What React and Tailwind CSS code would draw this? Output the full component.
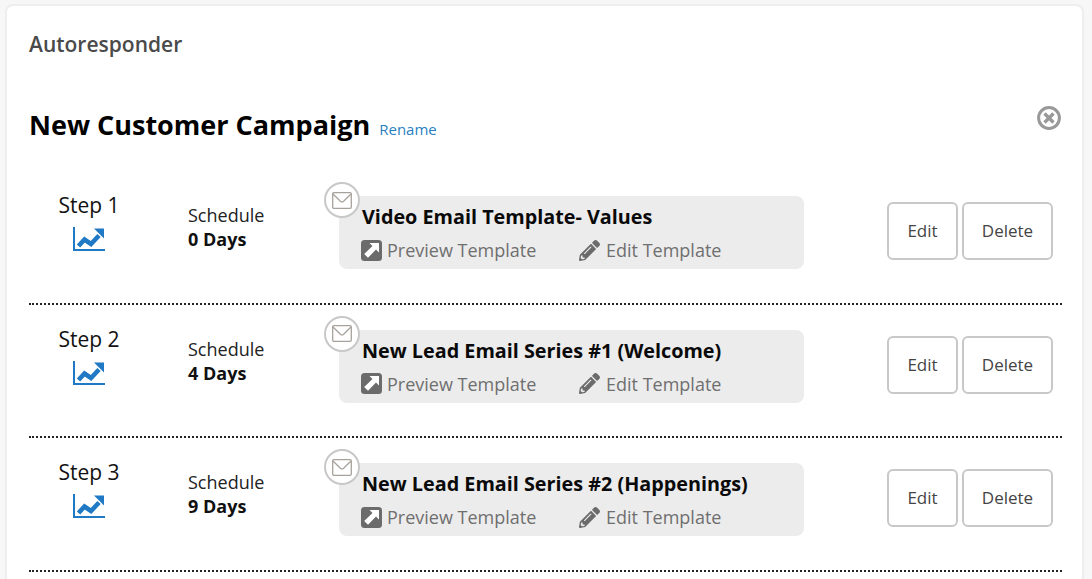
import React from 'react';
import { FaPencilAlt } from 'react-icons/fa';

const steps = [
  { step: 'Step 1', days: '0 Days', name: 'Video Email Template- Values' },
  { step: 'Step 2', days: '4 Days', name: 'New Lead Email Series #1 (Welcome)' },
  { step: 'Step 3', days: '9 Days', name: 'New Lead Email Series #2 (Happenings)' },
];

const EnvelopeIcon = () => (
  <svg width="20" height="17" viewBox="0 0 20 17" fill="none" stroke="#a8a29c" strokeWidth="1.3">
    <rect x="0.7" y="0.7" width="18.6" height="15.6" rx="1.2" />
    <path d="M1 2 L8.4 9.2 Q10 10.6 11.6 9.2 L19 2" />
  </svg>
);

const ChartIcon = () => (
  <svg width="32" height="24" viewBox="0 0 32 24" className="mt-[8px]">
    <path d="M1 0 V23 H32" fill="none" stroke="#2079c4" strokeWidth="2" />
    <path d="M5.5 19 L11.5 12.5 L18 17 L26 8.5" fill="none" stroke="#2079c4" strokeWidth="4.6" />
    <path d="M21 1.5 H31 V11.5 Z" fill="#2079c4" />
  </svg>
);

const PreviewIcon = () => (
  <svg width="21" height="21" viewBox="0 0 21 21" className="shrink-0 -ml-[1px]">
    <rect width="21" height="21" rx="3.5" fill="#6b6b6b" />
    <path d="M8.5 3 H18 V12.5 L15 9.5 L7 17.8 L3.2 14 L11.5 6 Z" fill="#fff" />
  </svg>
);

const CloseIcon = () => (
  <svg width="24" height="24" viewBox="0 0 24 24" fill="none" stroke="#999999">
    <circle cx="12" cy="12" r="10.4" strokeWidth="3" />
    <path d="M7.5 7.5 L16.5 16.5 M16.5 7.5 L7.5 16.5" strokeWidth="3.4" />
  </svg>
);

const StepRow = ({ item }) => (
  <div className="flex items-start h-[133.5px] border-b-2 border-dotted border-[#222]">
    <div className="w-[120px] pt-[20px] flex flex-col items-center shrink-0">
      <div className="text-[21px] leading-[28px] text-[#111]">{item.step}</div>
      <ChartIcon />
    </div>
    <div className="w-[190px] pl-[39px] pt-[32px] shrink-0 text-[18px] leading-[24px]">
      <div className="text-[#222]">Schedule</div>
      <div className="font-bold text-[#111]">{item.days}</div>
    </div>
    <div className="relative mt-[25px] w-[465px] h-[73px] rounded-[8px] bg-[#ececec] pl-[23px] pt-[7px] shrink-0">
      <div className="absolute left-[-15px] top-[-14px] w-[36px] h-[36px] rounded-full border-2 border-[#c8c8c8] bg-white flex items-center justify-center">
        <EnvelopeIcon />
      </div>
      <div className="text-[19.8px] leading-[27px] font-bold text-[#0a0a0a] whitespace-nowrap">{item.name}</div>
      <div className="flex items-center mt-[8px] text-[18px] leading-[24px] text-[#6f6f6f]">
        <PreviewIcon />
        <span className="ml-[5px] w-[192px]">Preview Template</span>
        <FaPencilAlt className="text-[21px] text-[#6b6b6b] mr-[6px]" />
        <span>Edit Template</span>
      </div>
    </div>
    <div className="ml-[83px] mt-[31px] flex gap-[4px]">
      <button className="w-[71px] h-[58px] rounded-[6px] border-2 border-[#c8c8c8] bg-white text-[17px] text-[#444]">Edit</button>
      <button className="w-[91px] h-[58px] rounded-[6px] border-2 border-[#c8c8c8] bg-white text-[17px] text-[#444]">Delete</button>
    </div>
  </div>
);

export default function App() {
  return (
    <div className="h-[579px] overflow-hidden bg-[#f7f7f7] pl-[5px] pr-[8px] pt-[4px] font-['Open_Sans',sans-serif]">
      <div className="h-[700px] rounded-[8px] border-2 border-[#eeeeee] bg-white pl-[22px] pr-[20px] pt-[24px]">
        <div className="text-[21px] leading-[28px] font-semibold text-[#4a4a4a]">Autoresponder</div>
        <div className="flex items-start justify-between mt-[48px] h-[65px]">
          <div className="flex items-baseline">
            <span className="text-[27px] leading-[38px] font-bold text-black">New Customer Campaign</span>
            <span className="ml-[9px] text-[15px] text-[#2a7fc1]">Rename</span>
          </div>
          <div className="mr-[1px]"><CloseIcon /></div>
        </div>
        {steps.map((item) => (
          <StepRow key={item.step} item={item} />
        ))}
      </div>
    </div>
  );
}
